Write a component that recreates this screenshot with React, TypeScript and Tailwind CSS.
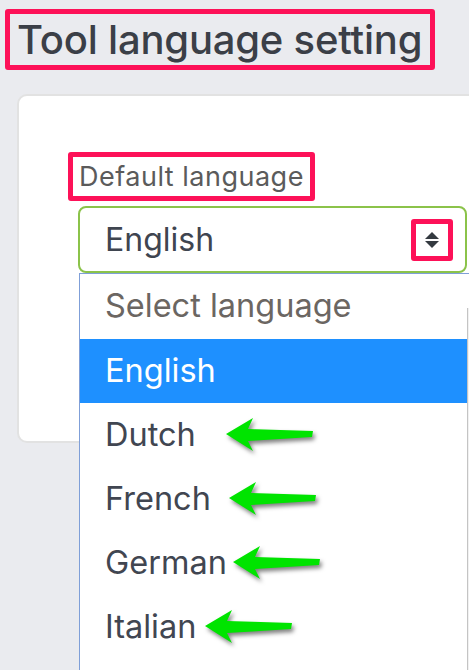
import React from "react";

const OPTIONS = [
  { label: "Dutch", arrow: "left-[145px]" },
  { label: "French", arrow: "left-[148px]" },
  { label: "German", arrow: "left-[152px]" },
  { label: "Italian", arrow: "left-[124px]" },
];

function GreenArrow({ className }: { className: string }) {
  return (
    <svg
      width="92"
      height="38"
      viewBox="0 0 92 38"
      className={`absolute top-1/2 -translate-y-1/2 drop-shadow-[2px_3px_2px_rgba(0,0,0,0.5)] ${className}`}
    >
      <polygon
        points="1,18 28,2 23,13 88,15 87,21 23,25 28,35"
        fill="#00e400"
      />
    </svg>
  );
}

function SortIcon() {
  return (
    <svg width="16" height="20" viewBox="0 0 16 20">
      <polygon points="8,2 15,9 1,9" fill="#343a40" />
      <polygon points="1,11 15,11 8,18" fill="#343a40" />
    </svg>
  );
}

export default function App() {
  return (
    <div
      className="relative w-[469px] h-[670px] overflow-hidden bg-[#eaebef] pt-[9px]"
      style={{ fontFamily: "Inter, 'Open Sans', sans-serif" }}
    >
      <div className="ml-[5px] w-fit border-[5px] border-[#fd1158] rounded-[3px] pl-[7px] pr-[8px]">
        <h1 className="text-[40px] leading-[51px] font-medium tracking-[-0.2px] text-[#3b3f47] whitespace-nowrap">
          Tool language setting
        </h1>
      </div>

      <div className="ml-[17px] mt-[24px] w-[470px] h-[349px] bg-white border-2 border-[#e2e2e2] rounded-[10px] pt-[56px]">
        <div className="ml-[49px] w-fit border-[5px] border-[#fd1158] rounded-[3px] pl-[6px] pr-[6px]">
          <span className="block text-[27px] leading-[39px] tracking-[0.5px] text-[#5b5b5b] whitespace-nowrap">
            Default language
          </span>
        </div>

        <div className="relative ml-[59px] mt-[5px] w-[389px]">
          <div className="h-[67px] border-2 border-[#8bc34a] rounded-[8px] flex items-center justify-between pl-[25px] pr-[12px]">
            <span className="text-[32px] text-[#3f4550]">English</span>
            <div className="w-[42px] h-[42px] border-[5px] border-[#fd1158] rounded-[3px] flex items-center justify-center">
              <SortIcon />
            </div>
          </div>

          <div className="absolute top-full left-[1px] w-[391px] h-[400px] bg-white border-l border-t border-[#7f9fd8] flex">
            <div className="flex-1">
              <div className="h-[65px] flex items-center pl-[25px] text-[32.5px] text-[#6b6662]">
                Select language
              </div>
              <div className="h-[64px] flex items-center pl-[25px] text-[32.5px] text-white bg-[#1e90ff]">
                English
              </div>
              {OPTIONS.map((o) => (
                <div
                  key={o.label}
                  className="relative h-[64px] flex items-center pl-[25px] text-[32.5px] text-[#414651]"
                >
                  {o.label}
                  <GreenArrow className={o.arrow} />
                </div>
              ))}
            </div>
            <div className="w-[3px] mt-[34px] bg-[#f1f1f1] border-l border-[#c4c4c4]" />
          </div>
        </div>
      </div>
    </div>
  );
}
